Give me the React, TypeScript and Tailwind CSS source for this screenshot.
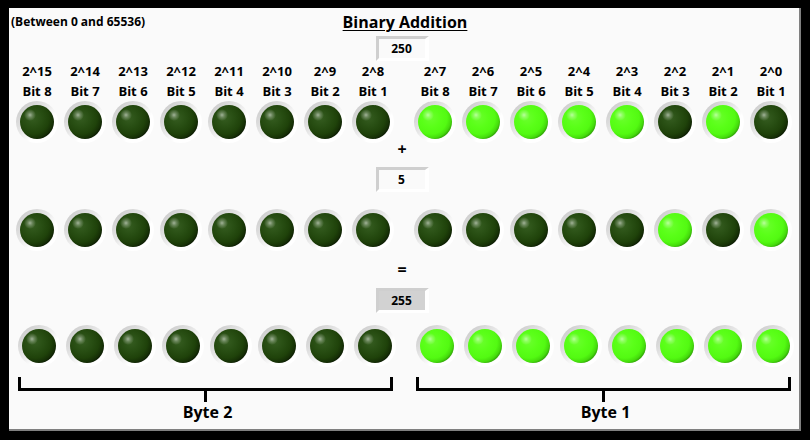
import { useState } from "react";

const BITS = [7, 6, 5, 4, 3, 2, 1, 0];

function Led({ on, label }: { on: boolean; label: string }) {
  return (
    <svg role="img" aria-label={label} width="42" height="42" viewBox="0 0 42 42" className="shrink-0">
      <circle cx="21" cy="21" r="21" fill="url(#ring)" />
      <circle cx="21" cy="21" r="17" fill={on ? "url(#lit)" : "url(#unlit)"} />
      <circle cx="14" cy="14" r="6" fill="url(#shine)" />
    </svg>
  );
}

function Gradients() {
  return (
    <defs>
      <linearGradient id="ring" x1="0.15" y1="0.15" x2="0.85" y2="0.85">
        <stop offset="0" stopColor="#d0d0d0" />
        <stop offset="0.4" stopColor="#e8e8e8" />
        <stop offset="0.7" stopColor="#ffffff" />
      </linearGradient>
      <radialGradient id="unlit" cx="0.38" cy="0.38" r="0.68">
        <stop offset="0" stopColor="#355c20" />
        <stop offset="0.4" stopColor="#284e13" />
        <stop offset="0.7" stopColor="#1f420a" />
        <stop offset="0.88" stopColor="#163006" />
        <stop offset="1" stopColor="#0a1703" />
      </radialGradient>
      <radialGradient id="lit" cx="0.38" cy="0.38" r="0.68">
        <stop offset="0" stopColor="#6aff2c" />
        <stop offset="0.4" stopColor="#5aff18" />
        <stop offset="0.7" stopColor="#53fa12" />
        <stop offset="0.87" stopColor="#45dc0c" />
        <stop offset="1" stopColor="#2c9606" />
      </radialGradient>
      <radialGradient id="shine">
        <stop offset="0" stopColor="#ffffff" stopOpacity="0.55" />
        <stop offset="0.4" stopColor="#ffffff" stopOpacity="0.28" />
        <stop offset="1" stopColor="#ffffff" stopOpacity="0" />
      </radialGradient>
    </defs>
  );
}

function LedRow({ name, value, className }: { name: string; value: number; className: string }) {
  return (
    <div className={`flex gap-[14px] ${className}`}>
      {[8, 0].map((base) => (
        <div key={base} className="grid flex-1 grid-cols-8 justify-items-center">
          {BITS.map((bit) => {
            const on = ((value >> (base + bit)) & 1) === 1;
            return <Led key={bit} on={on} label={`${name} 2^${base + bit} ${on ? "on" : "off"}`} />;
          })}
        </div>
      ))}
    </div>
  );
}

function NumberBox({ label, value, onChange }: { label: string; value: number; onChange?: (n: number) => void }) {
  return (
    <div className="flex justify-center pr-1">
      <input
        aria-label={label}
        inputMode="numeric"
        value={value}
        readOnly={!onChange}
        onChange={(e) => onChange?.(Number(e.target.value.replace(/\D/g, "")) & 65535)}
        className={`h-[25px] w-[53px] border-t-[3px] border-r-4 border-b-[3px] border-l-[3px] border-t-[#cfcfcf] border-r-white border-b-white border-l-[#cfcfcf] text-center text-xs font-bold outline-none ${
          onChange ? "bg-[#fafafa]" : "bg-[#d2d2d2]"
        }`}
      />
    </div>
  );
}

function ByteBracket({ label }: { label: string }) {
  return (
    <div className="flex flex-1 flex-col items-center">
      <div className="h-[14px] w-full border-x-[3px] border-b-[3px] border-black" />
      <div className="h-[11px] w-[3px] bg-black" />
      <div className="pl-1 text-base leading-5 font-bold">{label}</div>
    </div>
  );
}

export default function App() {
  const [a, setA] = useState(250);
  const [b, setB] = useState(5);
  const sum = a + b;

  return (
    <div className="flex min-h-screen flex-col bg-black px-[9px] pt-2 pb-[9px] font-['Open_Sans','Noto_Sans',sans-serif] text-black">
      <svg width="0" height="0" className="absolute" aria-hidden="true">
        <Gradients />
      </svg>
      <main className="flex-1 border-r-2 border-b-2 border-[#808080] bg-[#fafafa]">
        <header className="grid h-7 grid-cols-[1fr_auto_1fr] items-center pl-0.5">
          <p className="pb-px text-xs font-bold">(Between 0 and 65536)</p>
          <h1 className="text-base leading-6 font-bold underline decoration-1 underline-offset-2">Binary Addition</h1>
        </header>
        <NumberBox label="First number" value={a} onChange={setA} />

        <div className="flex gap-[14px] px-1">
          {[8, 0].map((base) => (
            <div key={base} className="grid flex-1 grid-cols-8 text-center text-[13px] leading-5 font-bold">
              {BITS.map((bit) => (
                <div key={bit} className="whitespace-nowrap">
                  <div>2^{base + bit}</div>
                  <div>Bit {bit + 1}</div>
                </div>
              ))}
            </div>
          ))}
        </div>

        <LedRow name="First number" value={a} className="px-1" />
        <div className="h-6 pr-1 text-center text-base leading-3 font-bold">+</div>
        <NumberBox label="Second number" value={b} onChange={setB} />
        <LedRow name="Second number" value={b} className="mt-[17px] px-1" />
        <div className="pr-1 text-center text-base leading-[37px] font-bold">=</div>
        <NumberBox label="Sum" value={sum} />
        <LedRow name="Sum" value={sum} className="mt-3 pr-0.5 pl-1.5" />

        <div className="mt-[10px] flex gap-[23px] pr-2 pl-[9px]">
          <ByteBracket label="Byte 2" />
          <ByteBracket label="Byte 1" />
        </div>
      </main>
    </div>
  );
}
